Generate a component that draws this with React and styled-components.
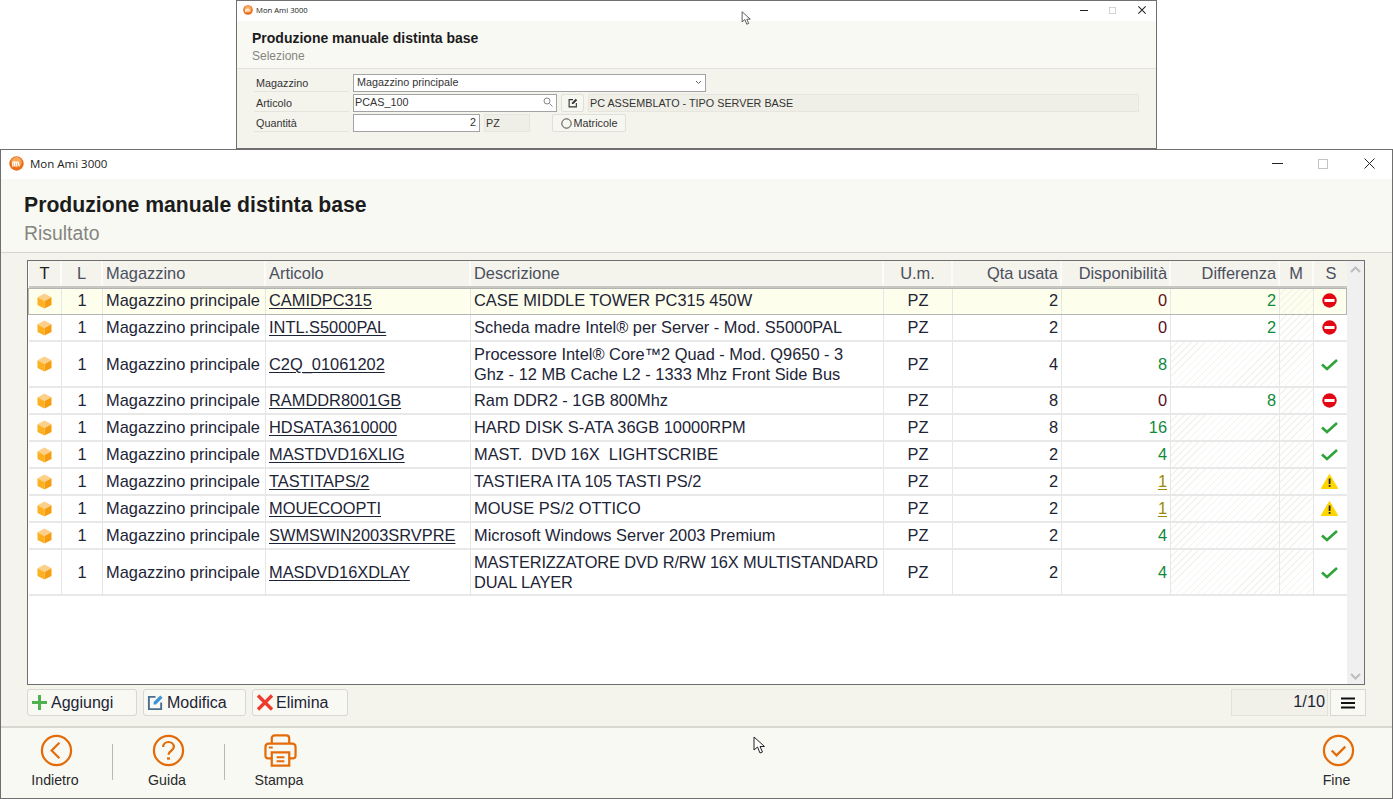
import styled, { createGlobalStyle } from 'styled-components';

const GlobalStyle = createGlobalStyle`
  html, body {
    margin: 0;
    padding: 0;
    background: #fff;
  }
  body {
    font-family: 'Liberation Sans', Arial, sans-serif;
    overflow: hidden;
  }
  * {
    box-sizing: border-box;
  }
`;

const COLUMNS = '33px 41px 163px 205px 413px 69px 109px 109px 109px 34px 34px';

const rows = [
  { code: 'CAMIDPC315', desc: ['CASE MIDDLE TOWER PC315 450W'], qty: 2, disp: 0, diff: 2, state: 'stop', selected: true },
  { code: 'INTL.S5000PAL', desc: ['Scheda madre Intel® per Server - Mod. S5000PAL'], qty: 2, disp: 0, diff: 2, state: 'stop' },
  { code: 'C2Q_01061202', desc: ['Processore Intel® Core™2 Quad - Mod. Q9650 - 3', 'Ghz - 12 MB Cache L2 - 1333 Mhz Front Side Bus'], qty: 4, disp: 8, state: 'ok' },
  { code: 'RAMDDR8001GB', desc: ['Ram DDR2 - 1GB 800Mhz'], qty: 8, disp: 0, diff: 8, state: 'stop' },
  { code: 'HDSATA3610000', desc: ['HARD DISK S-ATA 36GB 10000RPM'], qty: 8, disp: 16, state: 'ok' },
  { code: 'MASTDVD16XLIG', desc: ['MAST.  DVD 16X  LIGHTSCRIBE'], qty: 2, disp: 4, state: 'ok' },
  { code: 'TASTITAPS/2', desc: ['TASTIERA ITA 105 TASTI PS/2'], qty: 2, disp: 1, state: 'warn' },
  { code: 'MOUECOOPTI', desc: ['MOUSE PS/2 OTTICO'], qty: 2, disp: 1, state: 'warn' },
  { code: 'SWMSWIN2003SRVPRE', desc: ['Microsoft Windows Server 2003 Premium'], qty: 2, disp: 4, state: 'ok' },
  { code: 'MASDVD16XDLAY', desc: ['MASTERIZZATORE DVD R/RW 16X MULTISTANDARD', 'DUAL LAYER'], qty: 2, disp: 4, state: 'ok', tight: true },
];

const Desktop = styled.div`
  position: relative;
  width: 1393px;
  height: 799px;
  overflow: hidden;
  background: #fff;
`;

const Window = styled.div`
  position: absolute;
  display: flex;
  flex-direction: column;
  left: ${(p) => p.$left}px;
  top: ${(p) => p.$top}px;
  width: ${(p) => p.$width}px;
  height: ${(p) => p.$height}px;
  border: 1px solid #6f6f6f;
  background: #f4f3ec;
`;

const TitleBar = styled.div`
  display: flex;
  align-items: center;
  flex: none;
  height: ${(p) => (p.$small ? 20 : 29)}px;
  padding: 0 0 2px ${(p) => (p.$small ? 6 : 8)}px;
  background: #fff;
  color: #222;
  font-family: 'Open Sans', 'Noto Sans', sans-serif;
  font-size: ${(p) => (p.$small ? 7.7 : 11.5)}px;
  gap: ${(p) => (p.$small ? 3 : 6)}px;
`;

const TitleText = styled.span`
  flex: 1;
`;

const Controls = styled.div`
  display: flex;
  align-items: center;
  height: 100%;
`;

const WinButton = styled.span`
  display: flex;
  align-items: center;
  justify-content: center;
  width: ${(p) => (p.$small ? 29 : 46)}px;
  height: 100%;
`;

const Head = styled.div`
  flex: none;
  height: 74px;
  padding: 13px 0 0 23px;
  background: #f9f9f4;
  border-bottom: 1px solid #d6d6ce;
`;

const MainTitle = styled.div`
  font-size: 21.2px;
  font-weight: bold;
  line-height: 26px;
  color: #1c1c1c;
`;

const SubTitle = styled.div`
  margin-top: 2px;
  font-size: 19.4px;
  line-height: 26px;
  color: #85857f;
`;

const SmallHead = styled.div`
  flex: none;
  height: 48px;
  padding: 8px 0 0 15px;
  background: #f9f9f4;
  border-bottom: 1px solid #e2e2da;
`;

const SmallTitle = styled.div`
  font-size: 14px;
  font-weight: bold;
  line-height: 18px;
  color: #1c1c1c;
`;

const SmallSub = styled.div`
  font-size: 12px;
  line-height: 19px;
  color: #85857f;
`;

const Form = styled.div`
  display: flex;
  flex-direction: column;
  gap: 2px;
  padding: 5px 0 0 17px;
`;

const FormRow = styled.div`
  display: flex;
  align-items: stretch;
  height: 18px;
  font-size: 10.8px;
  color: #333;
`;

const FormLabel = styled.div`
  width: 95px;
  margin-right: 4px;
  padding-left: 2px;
  line-height: 18px;
  border-bottom: 1px solid #e4e4dc;
`;

const Input = styled.div`
  display: flex;
  align-items: center;
  justify-content: ${(p) => (p.$right ? 'flex-end' : 'space-between')};
  width: ${(p) => p.$width}px;
  padding: 0 3px 2px ${(p) => p.$pad || 2}px;
  background: #fff;
  border: 1px solid #a3a3a3;
  color: #333;
`;

const ReadOnly = styled.div`
  display: flex;
  align-items: center;
  width: ${(p) => p.$width}px;
  margin-left: ${(p) => p.$gap || 0}px;
  padding-left: 1px;
  background: #efefe7;
  border: 1px solid #e6e6de;
`;

const SmallButton = styled.div`
  display: flex;
  align-items: center;
  justify-content: center;
  gap: 2px;
  width: ${(p) => p.$width}px;
  margin-left: ${(p) => p.$gap}px;
  background: #f7f7f1;
  border: 1px solid #e0e0d8;
  border-radius: 2px;
`;

const Body = styled.div`
  flex: 1;
  display: flex;
  flex-direction: column;
  padding: 7px 27px 0 26px;
  min-height: 0;
`;

const GridBox = styled.div`
  position: relative;
  display: flex;
  flex: none;
  height: 425px;
  border: 1px solid #6f6f6f;
  background: #fff;
`;

const GridMain = styled.div`
  flex: 1;
  padding-left: 1px;
  min-width: 0;
`;

const Row = styled.div`
  --cell-pad: ${(p) => (p.$height > 27 ? 0 : 2)}px;
  display: grid;
  grid-template-columns: ${COLUMNS};
  height: ${(p) => p.$height}px;
  margin-left: ${(p) => (p.$selected ? -1 : 0)}px;
  background: ${(p) => (p.$selected ? '#fefeec' : '#fff')};
  font-size: 16.4px;
  color: #1d2436;
  ${(p) => p.$selected && 'outline: 1px solid #b4b4b4; outline-offset: -1px; padding-left: 1px;'}
`;

const HeaderRow = styled(Row)`
  height: 27px;
  background: #f4f3ec;
  color: #4a4f5e;
  border-bottom: 2px solid #c8c8c2;
`;

const HeadCell = styled.div`
  display: flex;
  align-items: center;
  justify-content: ${(p) => p.$align || 'flex-start'};
  padding: 0 ${(p) => (p.$align === 'flex-end' ? 2 : 3)}px 0 3px;
  border-right: 2px solid #fbfbf8;
  white-space: nowrap;
  ${(p) => p.$dark && 'color: #222;'}
  &:last-child {
    border-right: none;
  }
`;

const Cell = styled.div`
  display: flex;
  flex-direction: ${(p) => (p.$lines ? 'column' : 'row')};
  align-items: ${(p) => (p.$lines ? 'flex-start' : 'center')};
  justify-content: ${(p) => (p.$lines ? 'center' : p.$align || 'flex-start')};
  padding: 0 3px ${(p) => (p.$icon ? '0' : 'var(--cell-pad)')} 3px;
  white-space: pre;
  line-height: 20px;
  border-right: 1px solid #e6e6e6;
  border-bottom: 2px solid ${(p) => (p.$selected ? 'transparent' : '#e8e8e8')};
  color: ${(p) => p.$color || 'inherit'};
  ${(p) =>
    p.$hatch &&
    `background: repeating-linear-gradient(135deg, transparent 0, transparent 4px, #f4f4ee 4px, #f4f4ee 5px);`}
  &:last-child {
    padding-right: 4px;
    border-right: 2px solid transparent;
  }
`;

const DescLine = styled.span`
  letter-spacing: ${(p) => (p.$tight ? '-0.15px' : 'normal')};
`;

const CodeLink = styled.span`
  text-decoration: underline;
  text-underline-offset: 2px;
`;

const CubeWrap = styled.span`
  display: flex;
  margin-right: 2px;
`;

const Scrollbar = styled.div`
  flex: none;
  display: flex;
  flex-direction: column;
  justify-content: space-between;
  align-items: center;
  width: 17px;
  padding: 5px 0 4px;
  background: #f0f0f0;
`;

const Toolbar = styled.div`
  display: flex;
  align-items: stretch;
  flex: none;
  height: 27px;
  margin: 4px -1px 0 0;
`;

const ToolButton = styled.button`
  display: flex;
  align-items: center;
  gap: ${(p) => (p.$tight ? 2 : 3)}px;
  width: ${(p) => p.$width}px;
  margin-right: ${(p) => p.$gap || 0}px;
  padding: 0 0 0 3px;
  background: #f9f9f4;
  border: 1px solid #d8d8d0;
  border-radius: 3px;
  font-family: inherit;
  font-size: 16px;
  color: #1d2436;
`;

const Spacer = styled.div`
  flex: 1;
`;

const Pager = styled.div`
  width: 97px;
  padding: 2px 2px 0 0;
  text-align: right;
  background: #f1f1e9;
  border: 1px solid #e2e2da;
  font-size: 16.3px;
  color: #1d2436;
`;

const MenuButton = styled.div`
  display: flex;
  align-items: center;
  justify-content: center;
  width: 36px;
  margin-left: 2px;
  background: #f9f9f4;
  border: 1px solid #d8d8d0;
`;

const Footer = styled.div`
  flex: none;
  display: flex;
  align-items: stretch;
  height: 72px;
  background: #f9f9f4;
  border-top: 2px solid #d8d8d0;
`;

const Action = styled.div`
  display: flex;
  flex-direction: column;
  align-items: center;
  width: ${(p) => p.$width || 111}px;
  padding-top: 6px;
  font-size: 14.2px;
  color: #2a2a2a;
  gap: 5px;
`;

const ActionLabel = styled.span`
  margin-right: 3px;
`;

const Divider = styled.div`
  width: 1px;
  height: 36px;
  margin-top: 16px;
  background: #b9b9b3;
`;

const Cursor = styled.svg`
  position: absolute;
  left: ${(p) => p.$x}px;
  top: ${(p) => p.$y}px;
`;

const Logo = ({ size }) => (
  <svg width={size} height={size} viewBox="0 0 16 16">
    <circle cx="8" cy="8" r="7.7" fill="#e8701c" />
    <circle cx="8" cy="6.500" r="5.500" fill="#f9a95c" />
    <path d="M4 11.500V7.500c0-1.500 2-1.500 2 0V11M6 7.500c0-1.500 2-1.500 2 0V11M8 7.500c0-1.500 2-1.500 2 0c0 1 0 2.500 1.500 3" fill="none" stroke="#fff" strokeWidth="1.3" />
  </svg>
);

const Cube = () => (
  <svg width="15" height="16" viewBox="0 0 15 16">
    <path d="M7.5 0.5L14.5 4.2L7.5 8L0.5 4.2Z" fill="#fdd08a" />
    <path d="M0.5 4.2L7.5 8V15.5L0.5 12Z" fill="#fdb122" />
    <path d="M14.5 4.2L7.5 8V15.5L14.5 12Z" fill="#f59d0e" />
  </svg>
);

const StateIcon = ({ state }) => {
  if (state === 'stop') {
    return (
      <svg width="15" height="15" viewBox="0 0 15 15">
        <circle cx="7.5" cy="7.5" r="7.2" fill="#e30613" />
        <rect x="2.5" y="6" width="10" height="3" fill="#fff" />
      </svg>
    );
  }
  if (state === 'warn') {
    return (
      <svg width="17" height="15" viewBox="0 0 17 15">
        <path d="M8.5 0.5L16.7 14.5H0.3Z" fill="#ffd500" stroke="#ffd500" strokeLinejoin="round" />
        <rect x="7.7" y="4.5" width="1.8" height="5.5" fill="#222" />
        <rect x="7.7" y="11" width="1.8" height="1.8" fill="#222" />
      </svg>
    );
  }
  return (
    <svg width="17" height="13" viewBox="0 0 17 13">
      <path d="M1 6.5L6 11L16 2" fill="none" stroke="#2fa33a" strokeWidth="2.6" />
    </svg>
  );
};

const Chevron = ({ up }) => (
  <svg width="11" height="7" viewBox="0 0 11 7">
    <path d={up ? 'M1 6L5.5 1.5L10 6' : 'M1 1L5.5 5.5L10 1'} fill="none" stroke="#bdbdbd" strokeWidth="2" />
  </svg>
);

const Orange = ({ children }) => (
  <svg width="33" height="33" viewBox="0 0 34 34" fill="none" stroke="#e36c09" strokeWidth="2.3">
    {children}
  </svg>
);

const WinControls = ({ small }) => {
  const s = small ? 8 : 11;
  return (
    <Controls>
      <WinButton $small={small}>
        <svg width={s} height="1" viewBox={`0 0 ${s} 1`}>
          <rect width={s} height="1" fill="#222" />
        </svg>
      </WinButton>
      <WinButton $small={small}>
        <svg width={s - 1} height={s - 1} viewBox="0 0 10 10">
          <rect x="0.5" y="0.5" width="9" height="9" fill="none" stroke="#c4c4c4" />
        </svg>
      </WinButton>
      <WinButton $small={small}>
        <svg width={s} height={s} viewBox="0 0 11 11">
          <path d="M0.5 0.5L10.5 10.5M10.5 0.5L0.5 10.5" stroke="#222" strokeWidth={small ? 1.4 : 1} />
        </svg>
      </WinButton>
    </Controls>
  );
};

const editIcon = (size, color) => (
  <svg width={size} height={size} viewBox="0 0 18 18">
    <path d="M9 3H2V16H15V9" fill="none" stroke={color} strokeWidth="2" />
    <path d="M7 11V8.5L14 1.5L16.5 4L9.5 11Z" fill={color === '#4a6e8f' ? '#3b94d9' : color} />
  </svg>
);

const dispColor = (row) => {
  if (row.state === 'stop') return '#5a1020';
  if (row.state === 'warn') return '#9a8a00';
  return '#0f8a3a';
};

const App = () => {
  return (
    <Desktop>
      <GlobalStyle />

      <Window $left={236} $top={0} $width={921} $height={149}>
        <TitleBar $small>
          <Logo size={10} />
          <TitleText>Mon Ami 3000</TitleText>
          <WinControls small />
        </TitleBar>
        <SmallHead>
          <SmallTitle>Produzione manuale distinta base</SmallTitle>
          <SmallSub>Selezione</SmallSub>
        </SmallHead>
        <Form>
          <FormRow>
            <FormLabel>Magazzino</FormLabel>
            <Input $width={353} $pad={3}>
              Magazzino principale
              <svg width="7" height="5" viewBox="0 0 7 5">
                <path d="M1 1L3.5 3.5L6 1" fill="none" stroke="#666" />
              </svg>
            </Input>
          </FormRow>
          <FormRow>
            <FormLabel>Articolo</FormLabel>
            <Input $width={204} $pad={1}>
              PCAS_100
              <svg width="10" height="10" viewBox="0 0 10 10" fill="none" stroke="#888">
                <circle cx="4" cy="4" r="3" />
                <path d="M6.5 6.5L9.5 9.5" />
              </svg>
            </Input>
            <SmallButton $width={23} $gap={4}>
              {editIcon(10, '#333')}
            </SmallButton>
            <ReadOnly $width={551} $gap={4}>PC ASSEMBLATO - TIPO SERVER BASE</ReadOnly>
          </FormRow>
          <FormRow>
            <FormLabel>Quantità</FormLabel>
            <Input $width={127} $right>2</Input>
            <ReadOnly $width={46} $gap={4}>PZ</ReadOnly>
            <SmallButton $width={74} $gap={22}>
              <svg width="11" height="11" viewBox="0 0 11 11">
                <circle cx="5.5" cy="5.5" r="4.7" fill="none" stroke="#444" />
              </svg>
              Matricole
            </SmallButton>
          </FormRow>
        </Form>
      </Window>

      <Window $left={0} $top={149} $width={1393} $height={650}>
        <TitleBar>
          <Logo size={15} />
          <TitleText>Mon Ami 3000</TitleText>
          <WinControls />
        </TitleBar>
        <Head>
          <MainTitle>Produzione manuale distinta base</MainTitle>
          <SubTitle>Risultato</SubTitle>
        </Head>
        <Body>
          <GridBox>
            <GridMain>
              <HeaderRow>
                <HeadCell $align="center" $dark>T</HeadCell>
                <HeadCell $align="center">L</HeadCell>
                <HeadCell>Magazzino</HeadCell>
                <HeadCell>Articolo</HeadCell>
                <HeadCell>Descrizione</HeadCell>
                <HeadCell $align="center">U.m.</HeadCell>
                <HeadCell $align="flex-end">Qta usata</HeadCell>
                <HeadCell $align="flex-end">Disponibilità</HeadCell>
                <HeadCell $align="flex-end">Differenza</HeadCell>
                <HeadCell $align="center">M</HeadCell>
                <HeadCell $align="center">S</HeadCell>
              </HeaderRow>
              {rows.map((row) => {
                const s = row.selected;
                return (
                  <Row key={row.code} $height={row.desc.length > 1 ? 46 : 27} $selected={s}>
                    <Cell $align="center" $selected={s} $icon><CubeWrap><Cube /></CubeWrap></Cell>
                    <Cell $align="center" $selected={s}>1</Cell>
                    <Cell $selected={s}>Magazzino principale</Cell>
                    <Cell $selected={s}><CodeLink>{row.code}</CodeLink></Cell>
                    <Cell $lines={row.desc.length > 1} $selected={s}>
                      {row.desc.map((line) => <DescLine key={line} $tight={row.tight}>{line}</DescLine>)}
                    </Cell>
                    <Cell $align="center" $selected={s}>PZ</Cell>
                    <Cell $align="flex-end" $selected={s}>{row.qty}</Cell>
                    <Cell $align="flex-end" $selected={s} $color={dispColor(row)}>
                      {row.state === 'warn' ? <CodeLink>{row.disp}</CodeLink> : row.disp}
                    </Cell>
                    <Cell $align="flex-end" $selected={s} $color="#0f8a3a" $hatch={row.diff === undefined}>
                      {row.diff}
                    </Cell>
                    <Cell $selected={s} $hatch />
                    <Cell $align="center" $selected={s} $icon><StateIcon state={row.state} /></Cell>
                  </Row>
                );
              })}
            </GridMain>
            <Scrollbar>
              <Chevron up />
              <Chevron />
            </Scrollbar>
          </GridBox>
          <Toolbar>
            <ToolButton $width={110} $gap={6}>
              <svg width="17" height="17" viewBox="0 0 17 17">
                <path d="M8.5 1V16M1 8.5H16" stroke="#4fb04f" strokeWidth="3" />
              </svg>
              Aggiungi
            </ToolButton>
            <ToolButton $width={103} $gap={6}>
              {editIcon(17, '#4a6e8f')}
              Modifica
            </ToolButton>
            <ToolButton $width={96} $tight>
              <svg width="18" height="17" viewBox="0 0 18 17">
                <path d="M2 1.5L16 15.5M16 1.5L2 15.5" stroke="#ee3b2c" strokeWidth="3.4" />
              </svg>
              Elimina
            </ToolButton>
            <Spacer />
            <Pager>1/10</Pager>
            <MenuButton>
              <svg width="14" height="12" viewBox="0 0 14 12">
                <path d="M0 1.5H14M0 6H14M0 10.5H14" stroke="#111" strokeWidth="2" />
              </svg>
            </MenuButton>
          </Toolbar>
          <Spacer />
        </Body>
        <Footer>
          <Action>
            <Orange>
              <circle cx="17" cy="17" r="15" />
              <path d="M20 9L12 17L20 25" />
            </Orange>
            <ActionLabel>Indietro</ActionLabel>
          </Action>
          <Divider />
          <Action>
            <Orange>
              <circle cx="17" cy="17" r="15" />
              <path d="M11.5 13.5c0-7 11-7 11 0c0 4-5.500 3.500-5.500 8" />
              <path d="M17 24V26.500" strokeWidth="3" />
            </Orange>
            <ActionLabel>Guida</ActionLabel>
          </Action>
          <Divider />
          <Action>
            <Orange>
              <path d="M8 10V4.500C8 2.500 9 1.500 11 1.500H23C25 1.500 26 2.500 26 4.500V10" />
              <path d="M8 25H4C2.500 25 1.500 24 1.500 22.500V13.500C1.500 11 3 10 5 10H29C31 10 32.500 11 32.500 13.500V22.500C32.500 24 31.500 25 30 25H26" />
              <path d="M8 19H26V32.500H8Z" />
              <path d="M5 14H9M13 24H21M13 28H21" strokeWidth="2" />
            </Orange>
            <ActionLabel>Stampa</ActionLabel>
          </Action>
          <Spacer />
          <Action $width={108}>
            <Orange>
              <circle cx="17" cy="17" r="15" />
              <path d="M10 17L15 22L24 13" />
            </Orange>
            <ActionLabel>Fine</ActionLabel>
          </Action>
        </Footer>
      </Window>

      <Cursor $x={741} $y={11} width="10" height="14" viewBox="0 0 12 18">
        <path d="M1 1V14L4.500 11L7 17L9.500 16L7 10.500H11.500Z" fill="#fff" stroke="#333" />
      </Cursor>
      <Cursor $x={753} $y={736} width="12" height="18" viewBox="0 0 12 18">
        <path d="M1 1V14L4.500 11L7 17L9.500 16L7 10.500H11.500Z" fill="#fff" stroke="#222" />
      </Cursor>
    </Desktop>
  );
};

export default App;
